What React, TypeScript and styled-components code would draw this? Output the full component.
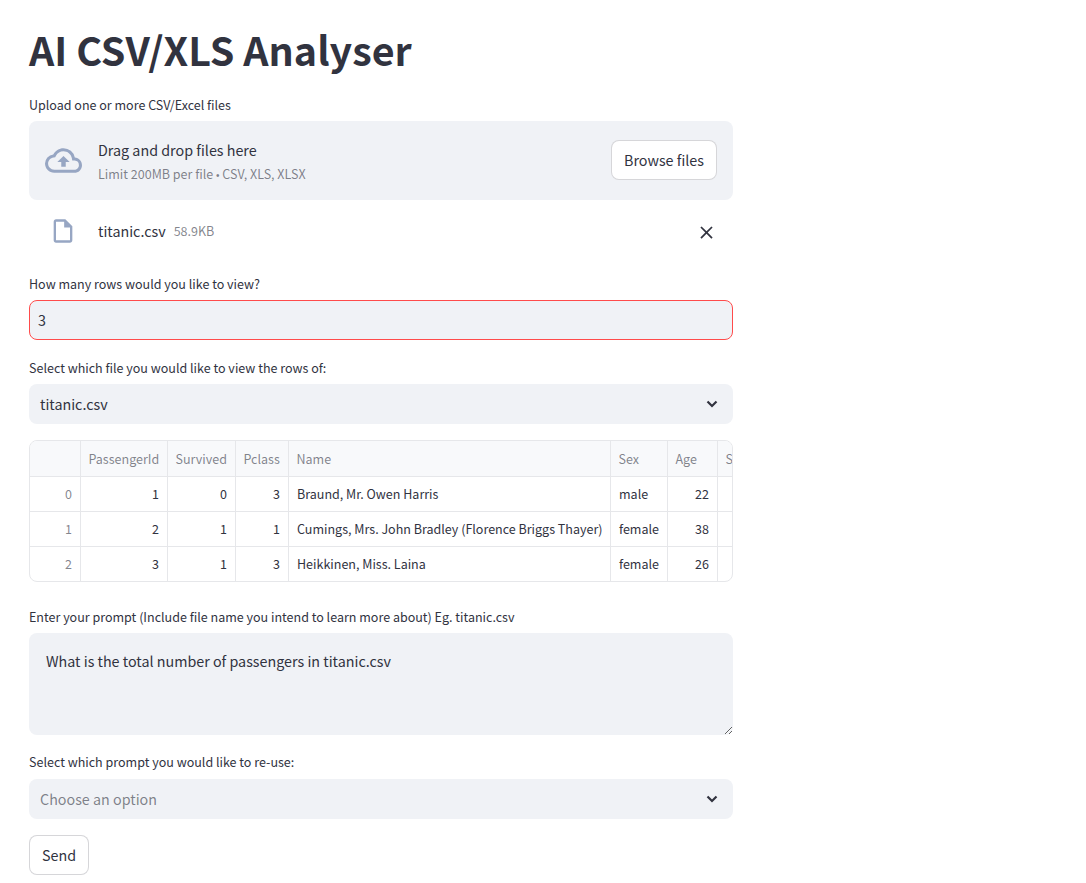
import styled, { createGlobalStyle } from "styled-components"
import { MdClose, MdOutlineCloudUpload, MdOutlineInsertDriveFile } from "react-icons/md"

// Latin glyphs of this family run about 1.117x large, hence the odd font sizes
const GlobalStyle = createGlobalStyle`
    html, body {
        margin: 0;
        padding: 0;
        background-color: #ffffff;
    }
    body {
        font-family: "Noto Sans CJK SC", "Noto Sans", sans-serif;
        color: #31333f;
    }
`

const Page = styled.main`
    width: 704px;
    margin-left: 29px;
    display: flex;
    flex-direction: column;
    padding-bottom: 8px;
`

const Title = styled.h1`
    margin: 0 0 18px;
    padding-top: 22px;
    font-size: 39.4px;
    line-height: 54px;
    font-weight: 700;
    letter-spacing: 0;
`

const Field = styled.div<{ $gap?: number }>`
    display: flex;
    flex-direction: column;
    margin-bottom: ${props => props.$gap ?? 16}px;
`

const Label = styled.label<{ $gap?: number }>`
    display: block;
    font-size: 12.53px;
    line-height: 22px;
    margin-bottom: ${props => props.$gap ?? 5}px;
`

const Dropzone = styled.div`
    height: 79px;
    box-sizing: border-box;
    padding: 0 16px 1px;
    display: flex;
    align-items: center;
    background-color: #f0f2f6;
    border-radius: 8px;
`

const CloudIcon = styled(MdOutlineCloudUpload)`
    width: 37px;
    height: 37px;
    color: #97a6c3;
    flex-shrink: 0;
    margin-right: 16px;
`

const DropText = styled.div`
    flex: 1;
    display: flex;
    flex-direction: column;
    padding-top: 5px;
`

const DropTitle = styled.span`
    font-size: 14.32px;
    line-height: 24px;
`

const Small = styled.span`
    font-size: 12.53px;
    line-height: 24px;
    color: rgba(49, 51, 63, 0.6);
`

const Bullet = styled.span`
    font-family: "Liberation Sans", sans-serif;
    font-size: 10px;
`

const Button = styled.button`
    height: 40px;
    box-sizing: border-box;
    padding: 0 12px 2px;
    background-color: #ffffff;
    color: #31333f;
    border: 1px solid rgba(49, 51, 63, 0.2);
    border-radius: 8px;
    font-family: inherit;
    font-size: 14.32px;
`

const FileRow = styled.div`
    height: 46px;
    margin: 8px 0 19px;
    display: flex;
    align-items: center;
`

const FileIcon = styled(MdOutlineInsertDriveFile)`
    width: 28px;
    height: 28px;
    color: #97a6c3;
    flex-shrink: 0;
    margin: 0 21px 0 20px;
`

const FileName = styled.span`
    font-size: 14.32px;
    line-height: 24px;
    margin-right: 8px;
`

const CloseIcon = styled(MdClose)`
    width: 21px;
    height: 21px;
    margin: 2px 16px 0 auto;
    color: #31333f;
`

const NumberInput = styled.input`
    height: 40px;
    box-sizing: border-box;
    width: 100%;
    padding: 0 8px 2px;
    background-color: #f0f2f6;
    border: 1px solid #ff4b4b;
    border-radius: 8px;
    outline: none;
    color: #31333f;
    font-family: inherit;
    font-size: 14.32px;
`

const Select = styled.div<{ $placeholder?: boolean }>`
    height: 40px;
    box-sizing: border-box;
    padding: 0 15px 2px 11px;
    display: flex;
    align-items: center;
    justify-content: space-between;
    background-color: #f0f2f6;
    border-radius: 8px;
    font-size: 14.32px;
    color: ${props => (props.$placeholder ? "rgba(49, 51, 63, 0.6)" : "#31333f")};
`

const Chevron = styled.svg`
    width: 12px;
    height: 8px;
    margin-top: 2px;
    fill: none;
    stroke: #31333f;
    stroke-width: 2.2;
`

const TableWrap = styled.div`
    height: 142px;
    box-sizing: border-box;
    border: 1px solid #e6e7ea;
    border-radius: 8px;
    overflow: hidden;
    margin-bottom: 24px;
`

const Table = styled.table`
    width: 748px;
    table-layout: fixed;
    border-collapse: separate;
    border-spacing: 0;
    font-size: 12.53px;
`

const Col = styled.col<{ $w: number }>`
    width: ${props => props.$w}px;
`

const Th = styled.th`
    height: 36px;
    box-sizing: border-box;
    padding: 0 8px 0 7.5px;
    text-align: left;
    font-weight: 400;
    white-space: nowrap;
    overflow: hidden;
    color: rgba(49, 51, 63, 0.6);
    background-color: #f8f9fb;
    border-right: 1px solid #e6e7ea;
    border-bottom: 1px solid #e6e7ea;
`

const Td = styled.td<{ $right?: boolean; $index?: boolean }>`
    height: 35px;
    box-sizing: border-box;
    padding: 0 8px 2px;
    white-space: nowrap;
    overflow: hidden;
    text-align: ${props => (props.$right ? "right" : "left")};
    color: ${props => (props.$index ? "rgba(49, 51, 63, 0.6)" : "#31333f")};
    border-right: 1px solid #e6e7ea;
    border-bottom: 1px solid #e6e7ea;
`

const PromptBox = styled.textarea`
    display: block;
    width: 100%;
    height: 102px;
    box-sizing: border-box;
    padding: 16px 16px 16px 17px;
    background-color: #f0f2f6;
    border: none;
    border-radius: 8px;
    outline: none;
    resize: vertical;
    color: #31333f;
    font-family: inherit;
    font-size: 14.32px;
    line-height: 24px;
`

const SendRow = styled.div`
    display: flex;
`

const columns = [51, 87, 68, 53, 322, 57, 50, 60]
const headers = ["", "PassengerId", "Survived", "Pclass", "Name", "Sex", "Age", "SibSp"]
const rows = [
    { id: 0, passenger: 1, survived: 0, pclass: 3, name: "Braund, Mr. Owen Harris", sex: "male", age: 22 },
    { id: 1, passenger: 2, survived: 1, pclass: 1, name: "Cumings, Mrs. John Bradley (Florence Briggs Thayer)", sex: "female", age: 38 },
    { id: 2, passenger: 3, survived: 1, pclass: 3, name: "Heikkinen, Miss. Laina", sex: "female", age: 26 },
]

const ChevronDown = () => (
    <Chevron viewBox="0 0 12 8">
        <polyline points="1.5,1.5 6,6 10.5,1.5" />
    </Chevron>
)

export default function App() {
    return (
        <>
            <GlobalStyle />
            <Page>
                <Title>AI CSV/XLS Analyser</Title>

                <Label>Upload one or more CSV/Excel files</Label>
                <Dropzone>
                    <CloudIcon />
                    <DropText>
                        <DropTitle>Drag and drop files here</DropTitle>
                        <Small>Limit 200MB per file <Bullet>•</Bullet> CSV, XLS, XLSX</Small>
                    </DropText>
                    <Button>Browse files</Button>
                </Dropzone>
                <FileRow>
                    <FileIcon />
                    <FileName>titanic.csv</FileName>
                    <Small>58.9KB</Small>
                    <CloseIcon />
                </FileRow>

                <Field $gap={17}>
                    <Label>How many rows would you like to view?</Label>
                    <NumberInput value="3" readOnly />
                </Field>

                <Field>
                    <Label>Select which file you would like to view the rows of:</Label>
                    <Select>
                        titanic.csv
                        <ChevronDown />
                    </Select>
                </Field>

                <TableWrap>
                    <Table>
                        <colgroup>
                            {columns.map((w, i) => <Col key={i} $w={w} />)}
                        </colgroup>
                        <thead>
                            <tr>
                                {headers.map(h => <Th key={h}>{h}</Th>)}
                            </tr>
                        </thead>
                        <tbody>
                            {rows.map(r => (
                                <tr key={r.id}>
                                    <Td $right $index>{r.id}</Td>
                                    <Td $right>{r.passenger}</Td>
                                    <Td $right>{r.survived}</Td>
                                    <Td $right>{r.pclass}</Td>
                                    <Td>{r.name}</Td>
                                    <Td>{r.sex}</Td>
                                    <Td $right>{r.age}</Td>
                                    <Td />
                                </tr>
                            ))}
                        </tbody>
                    </Table>
                </TableWrap>

                <Field>
                    <Label>Enter your prompt (Include file name you intend to learn more about) Eg. titanic.csv</Label>
                    <PromptBox defaultValue="What is the total number of passengers in titanic.csv" />
                </Field>

                <Field>
                    <Label $gap={6}>Select which prompt you would like to re-use:</Label>
                    <Select $placeholder>
                        Choose an option
                        <ChevronDown />
                    </Select>
                </Field>

                <SendRow>
                    <Button>Send</Button>
                </SendRow>
            </Page>
        </>
    )
}
